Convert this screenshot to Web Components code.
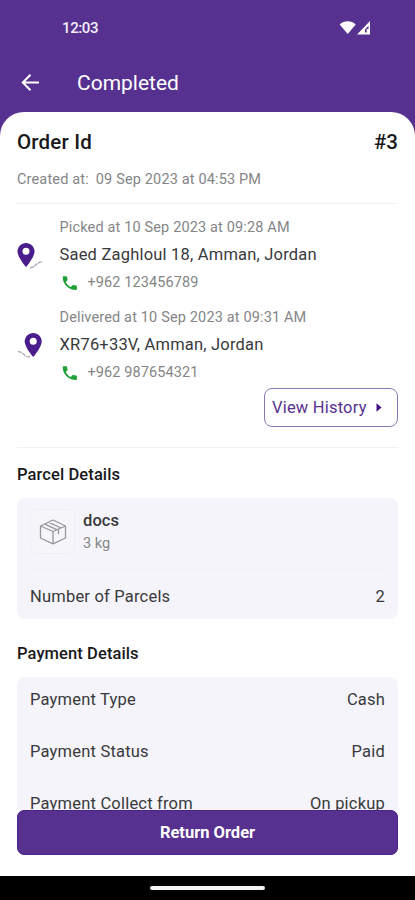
<!DOCTYPE html>
<html lang="en">
<head>
<meta charset="UTF-8">
<meta name="viewport" content="width=device-width, initial-scale=1">
<title>Order Details</title>
<style>
  :root {
    --primary: #57318f;
    --primary-dark: #431283;
    --text: #39393c;
    --text-strong: #18181b;
    --muted: #858587;
    --card: #f4f4fa;
    --divider: #f1f1f2;
  }

  body {
    margin: 0;
    background: #fff;
    font-family: Roboto, 'Liberation Sans', sans-serif;
    color: var(--text);
  }
</style>
</head>
<body>
<order-screen></order-screen>

<script>
// Attach an open shadow root and fill it with markup
class BaseElement extends HTMLElement {
  constructor() {
    super();
    this.attachShadow({ mode: 'open' });
    const template = document.createElement('template');
    template.innerHTML = this.render();
    this.shadowRoot.appendChild(template.content.cloneNode(true));
  }
}

class StatusBar extends BaseElement {
  render() {
    return `
      <style>
        :host {
          display: flex;
          align-items: center;
          justify-content: space-between;
          height: 56px;
          padding: 0 44px 0 62px;
          box-sizing: border-box;
          color: #f3eefb;
          font-size: 15px;
          font-weight: 500;
          letter-spacing: -0.4px;
        }
        svg { display: block; width: 32px; height: 16px; }
      </style>
      <span>12:03</span>
      <svg viewBox="0 0 32 16" fill="#fff">
        <path d="M.7 4.400C5 .3 12.400 .3 16.700 4.400L8.700 14z"/>
        <path d="M31 1V14.400H18zM29.500 5.800L26 9.500V12.500h1.700V9h1.800z" fill-rule="evenodd"/>
      </svg>
    `;
  }
}
customElements.define('status-bar', StatusBar);

class AppBar extends BaseElement {
  render() {
    return `
      <style>
        :host {
          display: flex;
          align-items: center;
          gap: 37px;
          height: 56px;
          padding: 0 21px 2px;
          box-sizing: border-box;
          color: #fff;
        }
        svg { display: block; width: 19px; height: 18px; }
        .title {
          font-size: 21px;
          line-height: 28px;
        }
      </style>
      <svg viewBox="0 0 19 18" fill="none" stroke="#fff" stroke-width="2">
        <path d="M18 8.500H2M9.500 .8L1.800 8.500l7.700 7.700"/>
      </svg>
      <span class="title"><slot></slot></span>
    `;
  }
}
customElements.define('app-bar', AppBar);

// One stop of the delivery: time, address and phone number
class OrderStop extends BaseElement {
  render() {
    return `
      <style>
        :host {
          display: flex;
          align-items: flex-start;
          height: 89.500px;
          box-sizing: border-box;
        }
        .pin { width: 42.500px; flex: none; padding-top: 26px; }
        .pin svg { display: block; width: 27px; height: 27px; }
        :host([kind="drop"]) .pickup,
        :host([kind="pickup"]) .drop { display: none; }
        .time {
          font-size: 14.500px;
          line-height: 22px;
          letter-spacing: 0.15px;
          color: var(--muted);
        }
        .address {
          font-size: 16.500px;
          line-height: 24px;
          margin-top: 4px;
          letter-spacing: 0.2px;
        }
        .phone {
          display: flex;
          align-items: center;
          gap: 10px;
          padding-left: 2px;
          margin-top: 5px;
          font-size: 14.500px;
          line-height: 22px;
          letter-spacing: 0.1px;
          color: var(--muted);
        }
        .phone svg { display: block; width: 16px; height: 16px; }
      </style>
      <div class="pin">
        <svg class="pickup" viewBox="0 0 27 27">
          <path d="M13 24.500c5 .8 5-4.500 12.500-6" fill="none" stroke="#a9a5b6" stroke-width="1.300" stroke-dasharray="4 .8"/>
          <path d="M9 0C4.300 0 .5 3.700 .5 8.500 .5 14.300 9 24 9 24s8.500-9.700 8.500-15.500C17.500 3.700 13.700 0 9 0z" fill="#4b1c8c"/>
          <circle cx="9" cy="8.200" r="3.500" fill="#fff"/>
        </svg>
        <svg class="drop" viewBox="0 0 27 27">
          <path d="M1 18.500c6.500 .5 5.500 6 12 5.300" fill="none" stroke="#a9a5b6" stroke-width="1.300" stroke-dasharray="4 .8"/>
          <path d="M16.200 0C11.500 0 7.700 3.700 7.700 8.500 7.700 14.300 16.200 24 16.200 24s8.500-9.700 8.500-15.500C24.700 3.700 20.900 0 16.200 0z" fill="#4b1c8c"/>
          <circle cx="16.200" cy="8.200" r="3.500" fill="#fff"/>
        </svg>
      </div>
      <div>
        <div class="time"><slot name="time"></slot></div>
        <div class="address"><slot name="address"></slot></div>
        <div class="phone">
          <svg viewBox="0 0 16 16" fill="#20a136">
            <path d="M3.700 1.200H1.500C1 1.200.700 1.500.700 2 .700 9.300 6.500 15 14 15c.500 0 .900-.300.900-.800v-2.700c0-.500-.300-.800-.800-.900-1-.100-1.900-.200-2.700-.500-.300-.100-.600 0-.900.200L8.800 12C6.600 10.900 4.900 9.100 3.800 6.900l1.600-1.700c.200-.200.300-.500.200-.800-.300-.800-.500-1.600-.500-2.500 0-.400-.400-.700-.800-.700z"/>
          </svg>
          <span><slot name="phone"></slot></span>
        </div>
      </div>
    `;
  }
}
customElements.define('order-stop', OrderStop);

class HistoryButton extends BaseElement {
  render() {
    return `
      <style>
        :host { display: flex; justify-content: flex-end; }
        button {
          display: flex;
          align-items: center;
          justify-content: space-between;
          width: 134px;
          height: 39px;
          padding: 0 15px 0 7px;
          box-sizing: border-box;
          border: 1px solid #8c78b5;
          border-radius: 8px;
          background: #fff;
          color: var(--primary);
          font: inherit;
          font-size: 16.500px;
          letter-spacing: 0.2px;
          white-space: nowrap;
        }
        svg { display: block; width: 6px; height: 9px; }
      </style>
      <button>
        <span><slot></slot></span>
        <svg viewBox="0 0 6 9" fill="var(--primary-dark)"><path d="M.5 .3L5.500 4.500 .5 8.700z"/></svg>
      </button>
    `;
  }
}
customElements.define('history-button', HistoryButton);

// Titled section with a tinted card below the heading
class DetailSection extends BaseElement {
  render() {
    return `
      <style>
        :host { display: block; }
        h2 {
          margin: 0 0 11px;
          font-size: 16.500px;
          line-height: 24px;
          font-weight: 500;
          letter-spacing: 0.1px;
          color: var(--text-strong);
        }
        .card {
          background: var(--card);
          border-radius: 8px;
          padding: 0 13px;
        }
      </style>
      <h2><slot name="heading"></slot></h2>
      <div class="card"><slot></slot></div>
    `;
  }
}
customElements.define('detail-section', DetailSection);

class DetailRow extends BaseElement {
  render() {
    return `
      <style>
        :host {
          display: flex;
          align-items: center;
          justify-content: space-between;
          height: 51.700px;
          padding-bottom: 6px;
          box-sizing: border-box;
          font-size: 16.500px;
          letter-spacing: 0.2px;
        }
        :host([last]) {
          height: 49px;
          padding: 3px 0 0;
        }
      </style>
      <span><slot></slot></span>
      <span><slot name="value"></slot></span>
    `;
  }
}
customElements.define('detail-row', DetailRow);

class ParcelItem extends BaseElement {
  render() {
    return `
      <style>
        :host {
          display: flex;
          gap: 8px;
          height: 72px;
          padding-top: 11px;
          box-sizing: border-box;
          border-bottom: 1px solid #f0f0f5;
        }
        .tile {
          display: flex;
          align-items: center;
          justify-content: center;
          width: 45px;
          height: 45px;
          box-sizing: border-box;
          border: 1px solid #eeeef3;
          border-radius: 6px;
          background: #f6f6fa;
        }
        svg { display: block; width: 28px; height: 28px; }
        .name {
          font-size: 16.500px;
          line-height: 23px;
          font-weight: 500;
          letter-spacing: 0.1px;
          color: var(--text);
        }
        .weight {
          font-size: 14.500px;
          line-height: 23px;
          color: var(--muted);
        }
      </style>
      <div class="tile">
        <svg viewBox="0 0 28 28" fill="none" stroke="#98989c" stroke-width="1.300" stroke-linejoin="round">
          <path d="M14 2L26.500 8V20L14 25.800 1.500 20V8zM1.500 8L14 13.500 26.500 8M14 13.500v12.300M5.800 6.200l12.500 5.700M9.700 4.300l12.500 5.700M19.500 11.400v4.800"/>
        </svg>
      </div>
      <div>
        <div class="name"><slot></slot></div>
        <div class="weight"><slot name="weight"></slot></div>
      </div>
    `;
  }
}
customElements.define('parcel-item', ParcelItem);

class ActionBar extends BaseElement {
  render() {
    return `
      <style>
        :host {
          display: block;
          padding: 0 17px 21px;
          background: #fff;
        }
        button {
          display: block;
          width: 100%;
          height: 45px;
          padding: 0;
          border: 1px solid #4c2389;
          border-radius: 7px;
          background: var(--primary);
          color: #fff;
          font: inherit;
          font-size: 16.500px;
          font-weight: 700;
        }
      </style>
      <button><slot></slot></button>
    `;
  }
}
customElements.define('action-bar', ActionBar);

class HomeIndicator extends BaseElement {
  render() {
    return `
      <style>
        :host {
          display: flex;
          justify-content: center;
          align-items: center;
          height: 24px;
          background: #000;
        }
        span {
          width: 115px;
          height: 4px;
          border-radius: 2px;
          background: #f4f4f4;
        }
      </style>
      <span></span>
    `;
  }
}
customElements.define('home-indicator', HomeIndicator);

class OrderScreen extends BaseElement {
  render() {
    return `
      <style>
        :host {
          display: flex;
          flex-direction: column;
          width: 415px;
          height: 900px;
          overflow: hidden;
          background: var(--primary);
        }
        main {
          flex: 1;
          min-height: 0;
          overflow: hidden;
          box-sizing: border-box;
          padding: 17px 17px 0;
          background: #fff;
          border-radius: 24px 24px 0 0;
        }
        .order {
          display: flex;
          justify-content: space-between;
          font-size: 20.500px;
          line-height: 26px;
          font-weight: 500;
          color: var(--text-strong);
        }
        .order span:first-child { letter-spacing: 0.2px; }
        .created {
          display: flex;
          gap: 7px;
          margin-top: 14px;
          font-size: 14.500px;
          line-height: 22px;
          letter-spacing: 0.15px;
          color: var(--muted);
        }
        hr {
          height: 1px;
          margin: 0;
          border: 0;
          background: var(--divider);
        }
        .created + hr { margin: 12px 0 13px; }
        history-button { margin-top: -8px; }
        history-button + hr { margin: 20px 0 15px; }
        detail-section + detail-section { margin-top: 23px; }
      </style>
      <status-bar></status-bar>
      <app-bar>Completed</app-bar>
      <main>
        <div class="order"><span>Order Id</span><span>#3</span></div>
        <div class="created"><span>Created at:</span><span>09 Sep 2023 at 04:53 PM</span></div>
        <hr>
        <order-stop kind="pickup">
          <span slot="time">Picked at 10 Sep 2023 at 09:28 AM</span>
          <span slot="address">Saed Zaghloul 18, Amman, Jordan</span>
          <span slot="phone">+962 123456789</span>
        </order-stop>
        <order-stop kind="drop">
          <span slot="time">Delivered at 10 Sep 2023 at 09:31 AM</span>
          <span slot="address">XR76+33V, Amman, Jordan</span>
          <span slot="phone">+962 987654321</span>
        </order-stop>
        <history-button>View History</history-button>
        <hr>
        <detail-section>
          <span slot="heading">Parcel Details</span>
          <parcel-item>docs<span slot="weight">3 kg</span></parcel-item>
          <detail-row last>Number of Parcels<span slot="value">2</span></detail-row>
        </detail-section>
        <detail-section>
          <span slot="heading">Payment Details</span>
          <detail-row>Payment Type<span slot="value">Cash</span></detail-row>
          <detail-row>Payment Status<span slot="value">Paid</span></detail-row>
          <detail-row>Payment Collect from<span slot="value">On pickup</span></detail-row>
        </detail-section>
      </main>
      <action-bar>Return Order</action-bar>
      <home-indicator></home-indicator>
    `;
  }
}
customElements.define('order-screen', OrderScreen);
</script>
</body>
</html>
